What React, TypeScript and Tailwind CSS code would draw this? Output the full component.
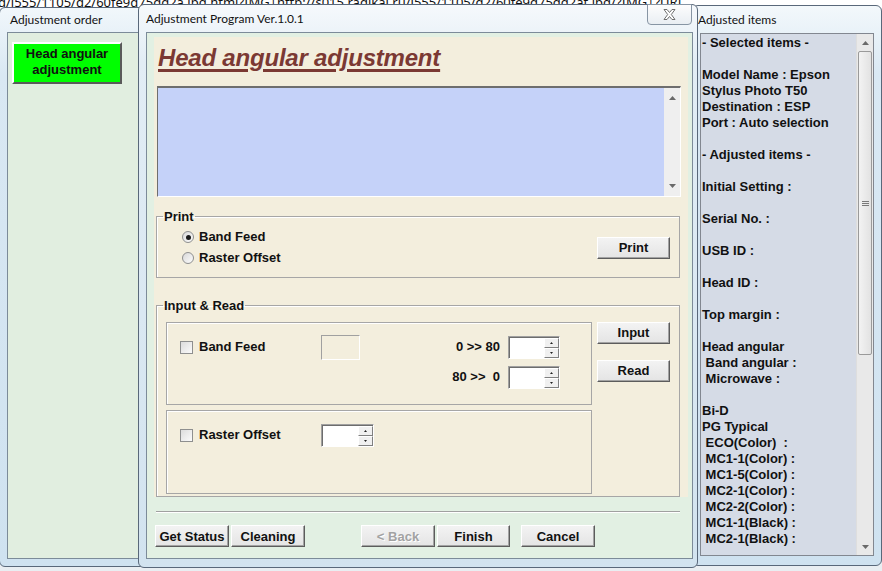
import React from 'react';
import clsx from 'clsx';

const ADJUSTED = [
  '- Selected items -',
  '',
  'Model Name : Epson',
  'Stylus Photo T50',
  'Destination : ESP',
  'Port : Auto selection',
  '',
  '- Adjusted items -',
  '',
  'Initial Setting :',
  '',
  'Serial No. :',
  '',
  'USB ID :',
  '',
  'Head ID :',
  '',
  'Top margin :',
  '',
  'Head angular',
  ' Band angular :',
  ' Microwave :',
  '',
  'Bi-D',
  'PG Typical',
  ' ECO(Color)  :',
  ' MC1-1(Color) :',
  ' MC1-5(Color) :',
  ' MC2-1(Color) :',
  ' MC2-2(Color) :',
  ' MC1-1(Black) :',
  ' MC2-1(Black) :',
];

function Arrow({ down }: { down?: boolean }) {
  return (
    <svg width="7" height="4" viewBox="0 0 7 4">
      <path d={down ? 'M0 0h7L3.5 4z' : 'M3.5 0L7 4H0z'} fill="#6a6a6a" />
    </svg>
  );
}

function Btn({ children, className, disabled }: { children: React.ReactNode; className?: string; disabled?: boolean }) {
  return (
    <button
      disabled={disabled}
      className={clsx(
        'h-[22px] flex items-center justify-center text-[13px] font-bold leading-none border border-t-white border-l-white border-r-[#5c5c5c] border-b-[#5c5c5c] bg-[linear-gradient(#f3f3f3,#e4e4e4)] shadow-[inset_-1px_-1px_0_#a3a3a3]',
        disabled ? 'text-[#a2a2a2] [text-shadow:1px_1px_0_#fff]' : 'text-[#111]',
        className,
      )}
    >
      {children}
    </button>
  );
}

function Check({ label }: { label: string }) {
  return (
    <div className="flex items-center gap-[6px]">
      <div className="w-[13px] h-[13px] border border-[#8e8f8f] bg-[linear-gradient(135deg,#dcdcdc,#fbfbfb)]" />
      <span className="text-[13px] font-bold text-[#111]">{label}</span>
    </div>
  );
}

function Radio({ label, checked }: { label: string; checked?: boolean }) {
  return (
    <div className="flex items-center gap-[5px] h-[21px]">
      <div className="w-[12px] h-[12px] rounded-full border border-[#8e8f8f] bg-[linear-gradient(135deg,#d8d8d8,#fdfdfd)] flex items-center justify-center">
        {checked && <div className="w-[5px] h-[5px] rounded-full bg-[#1a1a1a]" />}
      </div>
      <span className="text-[13px] font-bold text-[#111]">{label}</span>
    </div>
  );
}

function Spin({ className }: { className?: string }) {
  return (
    <div className={clsx('h-[23px] flex bg-white border border-t-[#a0a0a0] border-l-[#a0a0a0] border-r-white border-b-white', className)}>
      <div className="flex-1 border-t border-l border-t-[#6d6d6d] border-l-[#6d6d6d]" />
      <div className="w-[15px] flex flex-col border-t border-t-[#6d6d6d]">
        <div className="flex-1 flex items-center justify-center bg-[#f0f0f0] border border-t-white border-l-white border-r-[#808080] border-b-[#808080]">
          <svg width="3" height="2" viewBox="0 0 3 2"><path d="M1.5 0L3 2H0z" fill="#222" /></svg>
        </div>
        <div className="flex-1 flex items-center justify-center bg-[#f0f0f0] border border-t-white border-l-white border-r-[#808080] border-b-[#808080]">
          <svg width="3" height="2" viewBox="0 0 3 2"><path d="M0 0h3L1.5 2z" fill="#222" /></svg>
        </div>
      </div>
    </div>
  );
}

function CloseGlyph() {
  return (
    <svg width="13" height="11" viewBox="0 0 13 11">
      <path d="M1 .5h3l2.5 3 2.5-3h3L8.3 5.5l3.7 5H9L6.5 7.5 4 10.5H1l3.7-5z" fill="#fff" stroke="#6f6f6f" strokeWidth="1" strokeLinejoin="round" />
    </svg>
  );
}

export default function App() {
  return (
    <div className="relative w-[882px] h-[571px] overflow-hidden bg-[#e9eef2] font-['Liberation_Sans',Arial,sans-serif]">
      {/* browser address text behind the windows */}
      <div className="absolute left-0 top-0 w-full h-[8px] bg-white overflow-hidden">
        <div className="absolute left-[-2px] top-[-7px] whitespace-nowrap text-[13px] text-[#111] font-['Noto_Sans',sans-serif]">
          d/i555/1105/d2/60fe9d75dd2a.jpg.html?IMG|http://s015.radikal.ru/i555/1105/d2/60fe9d75dd2at.jpg/?IMG|?URL
        </div>
      </div>

      {/* Adjustment order window */}
      <div className="absolute left-[-1px] top-[7px] w-[150px] h-[560px] flex flex-col rounded-[6px] border border-[#59687a] bg-[linear-gradient(#f1f7fb,#d9e8f3_12%,#cfe2f0)] px-[7px] pb-[7px]">
        <div className="h-[24px] flex items-center pl-[3px] text-[12px] text-[#111] font-['Lato',sans-serif]">Adjustment order</div>
        <div className="flex-1 border border-[#7c8b99] bg-[#e1eee0] pt-[9px] pl-[4px]">
          <button className="w-[110px] h-[42px] flex flex-col items-center pt-[2px] bg-[#00ff00] border-2 border-t-white border-l-white border-r-[#5a5a5a] border-b-[#5a5a5a] text-[13px] font-bold leading-[16px] text-[#111]">
            <span>Head angular</span>
            <span>adjustment</span>
          </button>
        </div>
      </div>

      {/* Adjusted items window */}
      <div className="absolute left-[692px] top-[5px] w-[190px] h-[561px] flex flex-col rounded-[6px] border border-[#59687a] bg-[linear-gradient(#f3f8fb,#dae9f4_12%,#cfe2f0)] pl-[7px] pr-[7px] pb-[9px]">
        <div className="h-[27px] flex items-center ml-[-2px] text-[12px] text-[#111] font-['Lato',sans-serif]">Adjusted items</div>
        <div className="flex-1 flex border border-[#828790] bg-[#d5dbe6] overflow-hidden">
          <div className="flex-1 pl-[1px] pt-[1px] text-[13px] font-bold leading-[16px] text-[#111] whitespace-pre">
            {ADJUSTED.map((t, i) => (
              <div key={i} className="h-[16px]">{t}</div>
            ))}
          </div>
          <div className="w-[17px] flex flex-col bg-[#e9e9e9] border-l border-[#dedede]">
            <div className="h-[17px] flex items-center justify-center"><Arrow /></div>
            <div className="mx-[1px] h-[304px] rounded-[2px] border border-[#9a9a9a] bg-[linear-gradient(90deg,#f3f3f3,#e2e2e2)] flex items-center justify-center">
              <div className="flex flex-col gap-[1px]">
                <div className="w-[7px] h-[1px] bg-[#7a7a7a]" />
                <div className="w-[7px] h-[1px] bg-[#7a7a7a]" />
                <div className="w-[7px] h-[1px] bg-[#7a7a7a]" />
              </div>
            </div>
            <div className="flex-1" />
            <div className="h-[16px] flex items-center justify-center"><Arrow down /></div>
          </div>
        </div>
      </div>

      {/* Adjustment Program window */}
      <div className="absolute left-[138px] top-[4px] w-[560px] h-[564px] flex flex-col rounded-[6px] border border-[#59687a] bg-[linear-gradient(#f6f9fc,#e2edf5_10%,#d2e3ef)] pl-[7px] pr-[4px] pb-[8px]">
        <div className="h-[27px] flex items-center text-[12px] text-[#111] font-['Lato',sans-serif]">Adjustment Program Ver.1.0.1</div>
        <button className="absolute left-[508px] top-[-1px] w-[45px] h-[21px] flex items-center justify-center rounded-b-[4px] border border-[#8795a4] bg-[linear-gradient(#fdfdfd,#e9eef3)]">
          <CloseGlyph />
        </button>

        <div className="flex-1 flex flex-col border border-[#7c8b99] bg-[#e2f0e3]">
          {/* beige panel */}
          <div className="ml-[7px] mt-[4px] w-[534px] h-[460px] flex flex-col bg-[#f3eedd]">
            <div className="mt-[7px] pl-[4px] h-[28px] leading-[28px] text-[24px] font-bold italic text-[#7b3933] underline decoration-[3px] underline-offset-[3px] tracking-[-0.2px]">
              Head angular adjustment
            </div>
            <div className="ml-[3px] mt-[14px] w-[524px] h-[111px] flex border-t-2 border-l border-[#6e6e6e] border-b border-r border-b-white border-r-white">
              <div className="flex-1 bg-[#c5d2f9]" />
              <div className="w-[16px] flex flex-col justify-between bg-[#efefef] py-[8px]">
                <div className="flex justify-center"><Arrow /></div>
                <div className="flex justify-center"><Arrow down /></div>
              </div>
            </div>

            <fieldset className="ml-[2px] mt-[12px] w-[524px] h-[69px] border border-[#a6a6a6] shadow-[inset_1px_1px_0_#fff] px-0">
              <legend className="ml-[6px] px-[1px] text-[13px] font-bold leading-[16px] text-[#111]">Print</legend>
              <div className="flex justify-between pt-[2px]">
                <div className="pl-[25px] flex flex-col">
                  <Radio label="Band Feed" checked />
                  <Radio label="Raster Offset" />
                </div>
                <Btn className="w-[73px] mt-[10px] mr-[9px]">Print</Btn>
              </div>
            </fieldset>

            <fieldset className="ml-[2px] mt-[20px] w-[524px] h-[200px] border border-[#a6a6a6] shadow-[inset_1px_1px_0_#fff] px-0">
              <legend className="ml-[6px] px-[1px] text-[13px] font-bold leading-[16px] text-[#111]">Input &amp; Read</legend>
              <div className="flex gap-[5px] pl-[9px] pt-[8px]">
                <div className="flex flex-col gap-[5px]">
                  <div className="w-[426px] h-[83px] border border-[#a6a6a6] shadow-[inset_1px_1px_0_#fff] flex items-start pt-[12px]">
                    <div className="w-[154px] h-[25px] pl-[13px] flex items-center">
                      <Check label="Band Feed" />
                    </div>
                    <div className="w-[39px] h-[25px] border border-t-[#a0a0a0] border-l-[#a0a0a0] border-r-white border-b-white" />
                    <div className="ml-auto mr-[31px] mt-[1px] flex flex-col items-end gap-[7px]">
                      <div className="flex items-center gap-[8px]">
                        <span className="text-[13px] font-bold text-[#111] whitespace-pre">0 &gt;&gt; 80</span>
                        <Spin className="w-[52px]" />
                      </div>
                      <div className="flex items-center gap-[8px]">
                        <span className="text-[13px] font-bold text-[#111] whitespace-pre">80 &gt;&gt;  0</span>
                        <Spin className="w-[52px]" />
                      </div>
                    </div>
                  </div>
                  <div className="w-[426px] h-[84px] border border-[#a6a6a6] shadow-[inset_1px_1px_0_#fff] flex items-start pt-[13px]">
                    <div className="w-[154px] h-[23px] pl-[13px] flex items-center">
                      <Check label="Raster Offset" />
                    </div>
                    <Spin className="w-[53px]" />
                  </div>
                </div>
                <div className="flex flex-col">
                  <Btn className="w-[73px]">Input</Btn>
                  <Btn className="w-[73px] mt-[16px]">Read</Btn>
                </div>
              </div>
            </fieldset>
          </div>

          <div className="ml-[9px] mt-[14px] w-[524px] h-[2px] border-t border-[#a0a0a0] border-b border-b-white" />

          <div className="ml-[8px] mt-[12px] flex">
            <Btn className="w-[74px]">Get Status</Btn>
            <Btn className="w-[74px] ml-[2px]">Cleaning</Btn>
            <Btn className="w-[74px] ml-[56px]" disabled>&lt; Back</Btn>
            <Btn className="w-[73px] ml-[2px]">Finish</Btn>
            <Btn className="w-[74px] ml-[11px]">Cancel</Btn>
          </div>
        </div>
      </div>
    </div>
  );
}
